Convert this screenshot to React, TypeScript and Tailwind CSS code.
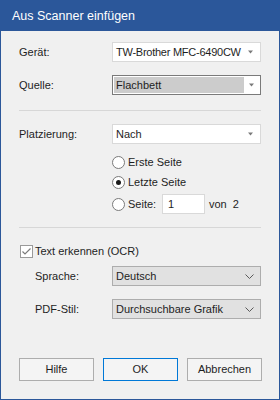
import React from 'react';

const FONT = { fontFamily: '"Liberation Sans", Arial, sans-serif' };

function Triangle() {
  return (
    <svg width="7" height="4" viewBox="0 0 7 4" className="shrink-0">
      <path d="M1 0.5 L6 0.5 L3.5 3.5 Z" fill="#7a7a7a" />
    </svg>
  );
}

function Chevron() {
  return (
    <svg width="9" height="5" viewBox="0 0 9 5" className="shrink-0">
      <path d="M0.5 0.5 L4.5 4.5 L8.5 0.5" fill="none" stroke="#5a5a5a" strokeWidth="1" />
    </svg>
  );
}

function Radio({ checked }: { checked?: boolean }) {
  return (
    <div className="w-[13px] h-[13px] rounded-full border border-[#7a7a7a] bg-white flex items-center justify-center shrink-0">
      {checked && <div className="w-[5px] h-[5px] rounded-full bg-[#1a1a1a]" />}
    </div>
  );
}

function Separator() {
  return <div className="mx-[18px] h-px bg-[#d7d7d7]" />;
}

export default function App() {
  return (
    <div
      className="w-[280px] h-[400px] bg-[#f0f0f0] border-x border-b border-[#2b579a] flex flex-col text-[11px] text-[#1e1e1e]"
      style={FONT}
    >
      <div className="h-[31px] bg-[#2b579a] text-white flex items-center pl-[11px] pt-[1px] text-[12.5px] shrink-0">
        Aus Scanner einfügen
      </div>

      <div className="flex flex-col pt-[11px]">
        <div className="flex items-center pl-[18px] h-[20px]">
          <span className="w-[93px]">Gerät:</span>
          <div className="w-[149px] h-[20px] bg-white border border-[#d9d9d9] flex items-center justify-between pl-[3px] pr-[6px]">
            <span className="whitespace-nowrap tracking-[-0.25px]">TW-Brother MFC-6490CW</span>
            <Triangle />
          </div>
        </div>

        <div className="flex items-center pl-[18px] h-[20px] mt-[13px]">
          <span className="w-[93px]">Quelle:</span>
          <div className="w-[149px] h-[20px] bg-white border border-[#7a7a7a] flex items-center p-[1px]">
            <div className="w-[130px] h-full bg-[#cccccc] flex items-center pl-[2px]">Flachbett</div>
            <div className="flex-1 flex justify-center">
              <Triangle />
            </div>
          </div>
        </div>

        <div className="mt-[15px]">
          <Separator />
        </div>

        <div className="flex items-center pl-[18px] h-[20px] mt-[13px]">
          <span className="w-[93px]">Platzierung:</span>
          <div className="w-[149px] h-[20px] bg-white border border-[#d9d9d9] flex items-center justify-between pl-[3px] pr-[6px]">
            <span>Nach</span>
            <Triangle />
          </div>
        </div>

        <div className="flex flex-col pl-[111px] mt-[8px]">
          <div className="flex items-center h-[20px] gap-[3px]">
            <Radio />
            <span>Erste Seite</span>
          </div>
          <div className="flex items-center h-[20px] gap-[3px]">
            <Radio checked />
            <span>Letzte Seite</span>
          </div>
          <div className="flex items-center h-[20px] gap-[3px] mt-[2px]">
            <Radio />
            <span className="w-[31px]">Seite:</span>
            <div className="w-[43px] h-[20px] bg-white border border-[#d9d9d9] flex items-center pl-[5px]">1</div>
            <span className="ml-[1px]">von&nbsp;&nbsp;2</span>
          </div>
        </div>

        <div className="mt-[13px]">
          <Separator />
        </div>

        <div className="flex items-center pl-[19px] h-[18px] mt-[14px] gap-[2px]">
          <div className="w-[13px] h-[13px] border border-[#9a9a9a] bg-white flex items-center justify-center shrink-0">
            <svg width="11" height="11" viewBox="0 0 11 11">
              <path d="M1.5 5.5 L4 8 L9.5 2.5" fill="none" stroke="#7b7b7b" strokeWidth="1.2" />
            </svg>
          </div>
          <span>Text erkennen (OCR)</span>
        </div>

        <div className="flex items-center pl-[34px] h-[20px] mt-[6px]">
          <span className="w-[77px]">Sprache:</span>
          <div className="w-[149px] h-[20px] bg-[#e1e1e1] border border-[#adadad] flex items-center justify-between pl-[3px] pr-[6px]">
            <span>Deutsch</span>
            <Chevron />
          </div>
        </div>

        <div className="flex items-center pl-[34px] h-[20px] mt-[13px]">
          <span className="w-[77px]">PDF-Stil:</span>
          <div className="w-[149px] h-[20px] bg-[#e1e1e1] border border-[#adadad] flex items-center justify-between pl-[3px] pr-[6px]">
            <span>Durchsuchbare Grafik</span>
            <Chevron />
          </div>
        </div>

        <div className="flex pl-[18px] gap-[9px] mt-[39px]">
          <div className="w-[75px] h-[23px] border border-[#adadad] bg-[#f4f4f4] flex items-center justify-center">Hilfe</div>
          <div className="w-[75px] h-[23px] border border-[#0078d7] bg-[#f4f4f4] flex items-center justify-center">OK</div>
          <div className="w-[75px] h-[23px] border border-[#adadad] bg-[#f4f4f4] flex items-center justify-center">Abbrechen</div>
        </div>
      </div>
    </div>
  );
}
